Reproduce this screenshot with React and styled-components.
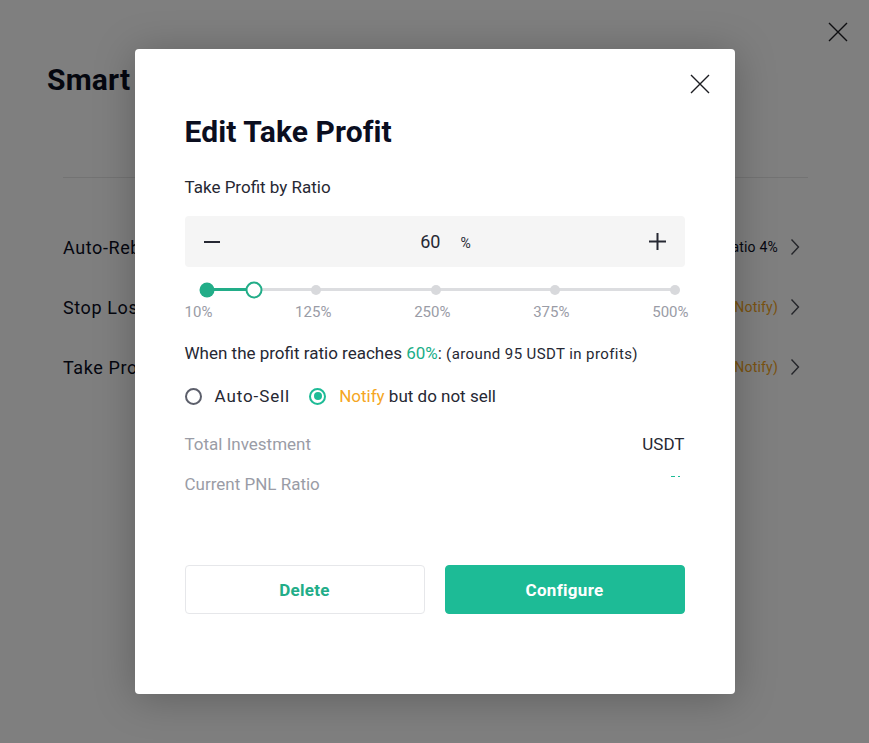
import styled, { createGlobalStyle } from "styled-components";

const GlobalStyle = createGlobalStyle`
  html, body {
    margin: 0;
    padding: 0;
    background: #fff;
    font-family: Roboto, "Noto Sans", sans-serif;
    color: #0b0e1f;
  }
  * { box-sizing: border-box; }
`;

const GREEN = "#1dbb96";
const ORANGE = "#f5a623";

const Page = styled.div`
  position: relative;
  width: 869px;
  height: 743px;
  overflow: hidden;
  background: #fff;
`;

const Drawer = styled.div`
  padding: 60px 61px 0 63px;
`;

const DrawerTitle = styled.h1`
  margin: 0 0 0 -16px;
  font-size: 30px;
  font-weight: 700;
  line-height: 40px;
  letter-spacing: 0.2px;
`;

const Divider = styled.div`
  height: 1px;
  background: #e6e6e6;
  margin: 77px 0 39px;
`;

const SettingRow = styled.div`
  display: flex;
  align-items: center;
  justify-content: space-between;
  height: 60px;
  padding-right: 8px;
  font-size: 18px;
  letter-spacing: 0.6px;
`;

const SettingValue = styled.span`
  display: flex;
  align-items: center;
  gap: 12px;
  font-size: 14px;
  letter-spacing: 0.2px;
  color: ${(p) => (p.$tone === "orange" ? ORANGE : "#0b0e1f")};
`;

const Close = styled.button`
  position: absolute;
  top: ${(p) => p.$top}px;
  right: ${(p) => p.$right}px;
  width: 22px;
  height: 22px;
  padding: 0;
  border: 0;
  background: transparent;
  display: flex;
  align-items: center;
  justify-content: center;
`;

const Mask = styled.div`
  position: absolute;
  inset: 0;
  background: rgba(0, 0, 0, 0.5);
  display: flex;
  justify-content: center;
  align-items: flex-start;
  padding-top: 49px;
`;

const Modal = styled.div`
  position: relative;
  width: 600px;
  height: 645px;
  background: #fff;
  border-radius: 4px;
  box-shadow: 0 4px 40px rgba(0, 0, 0, 0.25);
  padding: 61px 50px 0;
`;

const Title = styled.h2`
  margin: 0;
  font-size: 30px;
  font-weight: 700;
  line-height: 44px;
  letter-spacing: 0.1px;
  color: #0b0e1f;
`;

const FieldLabel = styled.div`
  margin-top: 22px;
  font-size: 17px;
  line-height: 22px;
  color: #262833;
`;

const Stepper = styled.div`
  margin-top: 18px;
  height: 51px;
  background: #f5f5f5;
  border-radius: 4px;
  display: flex;
  align-items: center;
  justify-content: space-between;
  padding: 0 18px;
`;

const StepButton = styled.button`
  width: 18px;
  height: 18px;
  padding: 0;
  border: 0;
  background: transparent;
  display: flex;
  align-items: center;
  justify-content: center;
`;

const StepValue = styled.div`
  display: flex;
  align-items: baseline;
  gap: 20px;
  font-size: 18px;
  color: #262833;
  margin-left: 22px;
`;

const Unit = styled.span`
  font-size: 14px;
`;

const Slider = styled.div`
  position: relative;
  height: 22px;
  margin: 11px 10px 0 22px;
`;

const Track = styled.div`
  position: absolute;
  left: 0;
  right: 0;
  top: 10px;
  height: 3px;
  border-radius: 2px;
  background: #dcdde0;
`;

const TrackFill = styled.div`
  position: absolute;
  left: 0;
  top: 10px;
  height: 3px;
  background: #22ad88;
`;

const Mark = styled.span`
  position: absolute;
  top: 11.5px;
  width: ${(p) => (p.$first ? 15 : 10)}px;
  height: ${(p) => (p.$first ? 15 : 10)}px;
  border-radius: 50%;
  transform: translate(-50%, -50%);
  background: ${(p) => (p.$active ? "#22ad88" : "#d8d9dc")};
`;

const Handle = styled.span`
  position: absolute;
  top: 11.5px;
  width: 17px;
  height: 17px;
  border-radius: 50%;
  transform: translate(-50%, -50%);
  background: #fff;
  border: 2px solid #22ad88;
`;

const MarkLabels = styled.div`
  display: flex;
  justify-content: space-between;
  margin: 2px -4px 0 0;
  font-size: 15px;
  line-height: 20px;
  color: #9a9ca6;
`;

const Summary = styled.div`
  margin-top: 20px;
  font-size: 17px;
  line-height: 22px;
  color: #262833;
`;

const Hl = styled.span`
  color: ${(p) => p.$color};
`;

const Small = styled.span`
  font-size: 15px;
  letter-spacing: 0.4px;
`;

const Options = styled.div`
  display: flex;
  align-items: center;
  gap: 19px;
  margin-top: 20px;
  height: 22px;
`;

const Option = styled.label`
  display: flex;
  align-items: center;
  gap: 13px;
  font-size: 17px;
  color: #262833;
`;

const SellLabel = styled.span`
  letter-spacing: 0.9px;
`;

const Radio = styled.span`
  width: 17px;
  height: 17px;
  border-radius: 50%;
  border: 2px solid ${(p) => (p.$checked ? GREEN : "#5c5f6b")};
  display: flex;
  align-items: center;
  justify-content: center;
  &::after {
    content: "";
    width: 8px;
    height: 8px;
    border-radius: 50%;
    background: ${(p) => (p.$checked ? GREEN : "transparent")};
  }
`;

const InfoList = styled.div`
  margin-top: 26px;
  display: flex;
  flex-direction: column;
  gap: 18px;
`;

const InfoRow = styled.div`
  display: flex;
  justify-content: space-between;
  align-items: flex-start;
  font-size: 17px;
  line-height: 22px;
  color: #9a9ca6;
`;

const InfoValue = styled.span`
  color: #262833;
`;

const PnlPeek = styled.span`
  width: 9px;
  height: 1px;
  margin: 3px 5px 0 0;
  background: linear-gradient(
    to right,
    ${GREEN} 0 4px,
    transparent 4px 7px,
    ${GREEN} 7px 9px
  );
`;

const Actions = styled.div`
  display: grid;
  grid-template-columns: 1fr 1fr;
  gap: 20px;
  margin-top: 70px;
`;

const ActionButton = styled.button`
  height: 49px;
  border-radius: 4px;
  font-family: inherit;
  font-size: 17px;
  font-weight: 700;
  letter-spacing: 0.3px;
  border: 1px solid ${(p) => (p.$primary ? GREEN : "#e6e7ea")};
  background: ${(p) => (p.$primary ? GREEN : "#fff")};
  color: ${(p) => (p.$primary ? "#fff" : "#22ad88")};
`;

function CrossIcon({ size = 20, color = "#1c1d22" }) {
  return (
    <svg width={size} height={size} viewBox="0 0 20 20" fill="none">
      <path d="M1 1L19 19M19 1L1 19" stroke={color} strokeWidth="1.4" />
    </svg>
  );
}

function Chevron() {
  return (
    <svg width="10" height="18" viewBox="0 0 10 18" fill="none">
      <path d="M1.5 1.5L8.5 9L1.5 16.5" stroke="#4a4c55" strokeWidth="1.4" />
    </svg>
  );
}

const marks = [10, 125, 250, 375, 500];
const current = 60;
const toPct = (v) => ((v - 10) / (500 - 10)) * 100;

export default function App() {
  return (
    <Page>
      <GlobalStyle />
      <Drawer>
        <DrawerTitle>Smart Settings</DrawerTitle>
        <Divider />
        <SettingRow>
          <span>Auto-Rebalance</span>
          <SettingValue>
            Rebalance Ratio 4% <Chevron />
          </SettingValue>
        </SettingRow>
        <SettingRow>
          <span>Stop Loss</span>
          <SettingValue $tone="orange">
            -20% (Notify) <Chevron />
          </SettingValue>
        </SettingRow>
        <SettingRow>
          <span>Take Profit</span>
          <SettingValue $tone="orange">
            60% (Notify) <Chevron />
          </SettingValue>
        </SettingRow>
      </Drawer>
      <Close $top={21} $right={20} aria-label="Close">
        <CrossIcon />
      </Close>

      <Mask>
        <Modal>
          <Close $top={24} $right={24} aria-label="Close">
            <CrossIcon />
          </Close>
          <Title>Edit Take Profit</Title>
          <FieldLabel>Take Profit by Ratio</FieldLabel>
          <Stepper>
            <StepButton aria-label="Decrease">
              <svg width="16" height="16" viewBox="0 0 16 16">
                <path d="M0 8H16" stroke="#262833" strokeWidth="2" />
              </svg>
            </StepButton>
            <StepValue>
              60 <Unit>%</Unit>
            </StepValue>
            <StepButton aria-label="Increase">
              <svg width="17" height="17" viewBox="0 0 17 17">
                <path d="M0 8.5H17M8.5 0V17" stroke="#262833" strokeWidth="2" />
              </svg>
            </StepButton>
          </Stepper>

          <Slider>
            <Track />
            <TrackFill style={{ width: `${toPct(current)}%` }} />
            {marks.map((m, i) => (
              <Mark
                key={m}
                $first={i === 0}
                $active={m <= current}
                style={{ left: `${toPct(m)}%` }}
              />
            ))}
            <Handle style={{ left: `${toPct(current)}%` }} />
          </Slider>
          <MarkLabels>
            {marks.map((m) => (
              <span key={m}>{m}%</span>
            ))}
          </MarkLabels>

          <Summary>
            When the profit ratio reaches <Hl $color="#1aae88">60%</Hl>:{" "}
            <Small>(around 95 USDT in profits)</Small>
          </Summary>

          <Options>
            <Option>
              <Radio />
              <SellLabel>Auto-Sell</SellLabel>
            </Option>
            <Option>
              <Radio $checked />
              <span>
                <Hl $color={ORANGE}>Notify</Hl> but do not sell
              </span>
            </Option>
          </Options>

          <InfoList>
            <InfoRow>
              <span>Total Investment</span>
              <InfoValue>USDT</InfoValue>
            </InfoRow>
            <InfoRow>
              <span>Current PNL Ratio</span>
              <PnlPeek />
            </InfoRow>
          </InfoList>

          <Actions>
            <ActionButton>Delete</ActionButton>
            <ActionButton $primary>Configure</ActionButton>
          </Actions>
        </Modal>
      </Mask>
    </Page>
  );
}
